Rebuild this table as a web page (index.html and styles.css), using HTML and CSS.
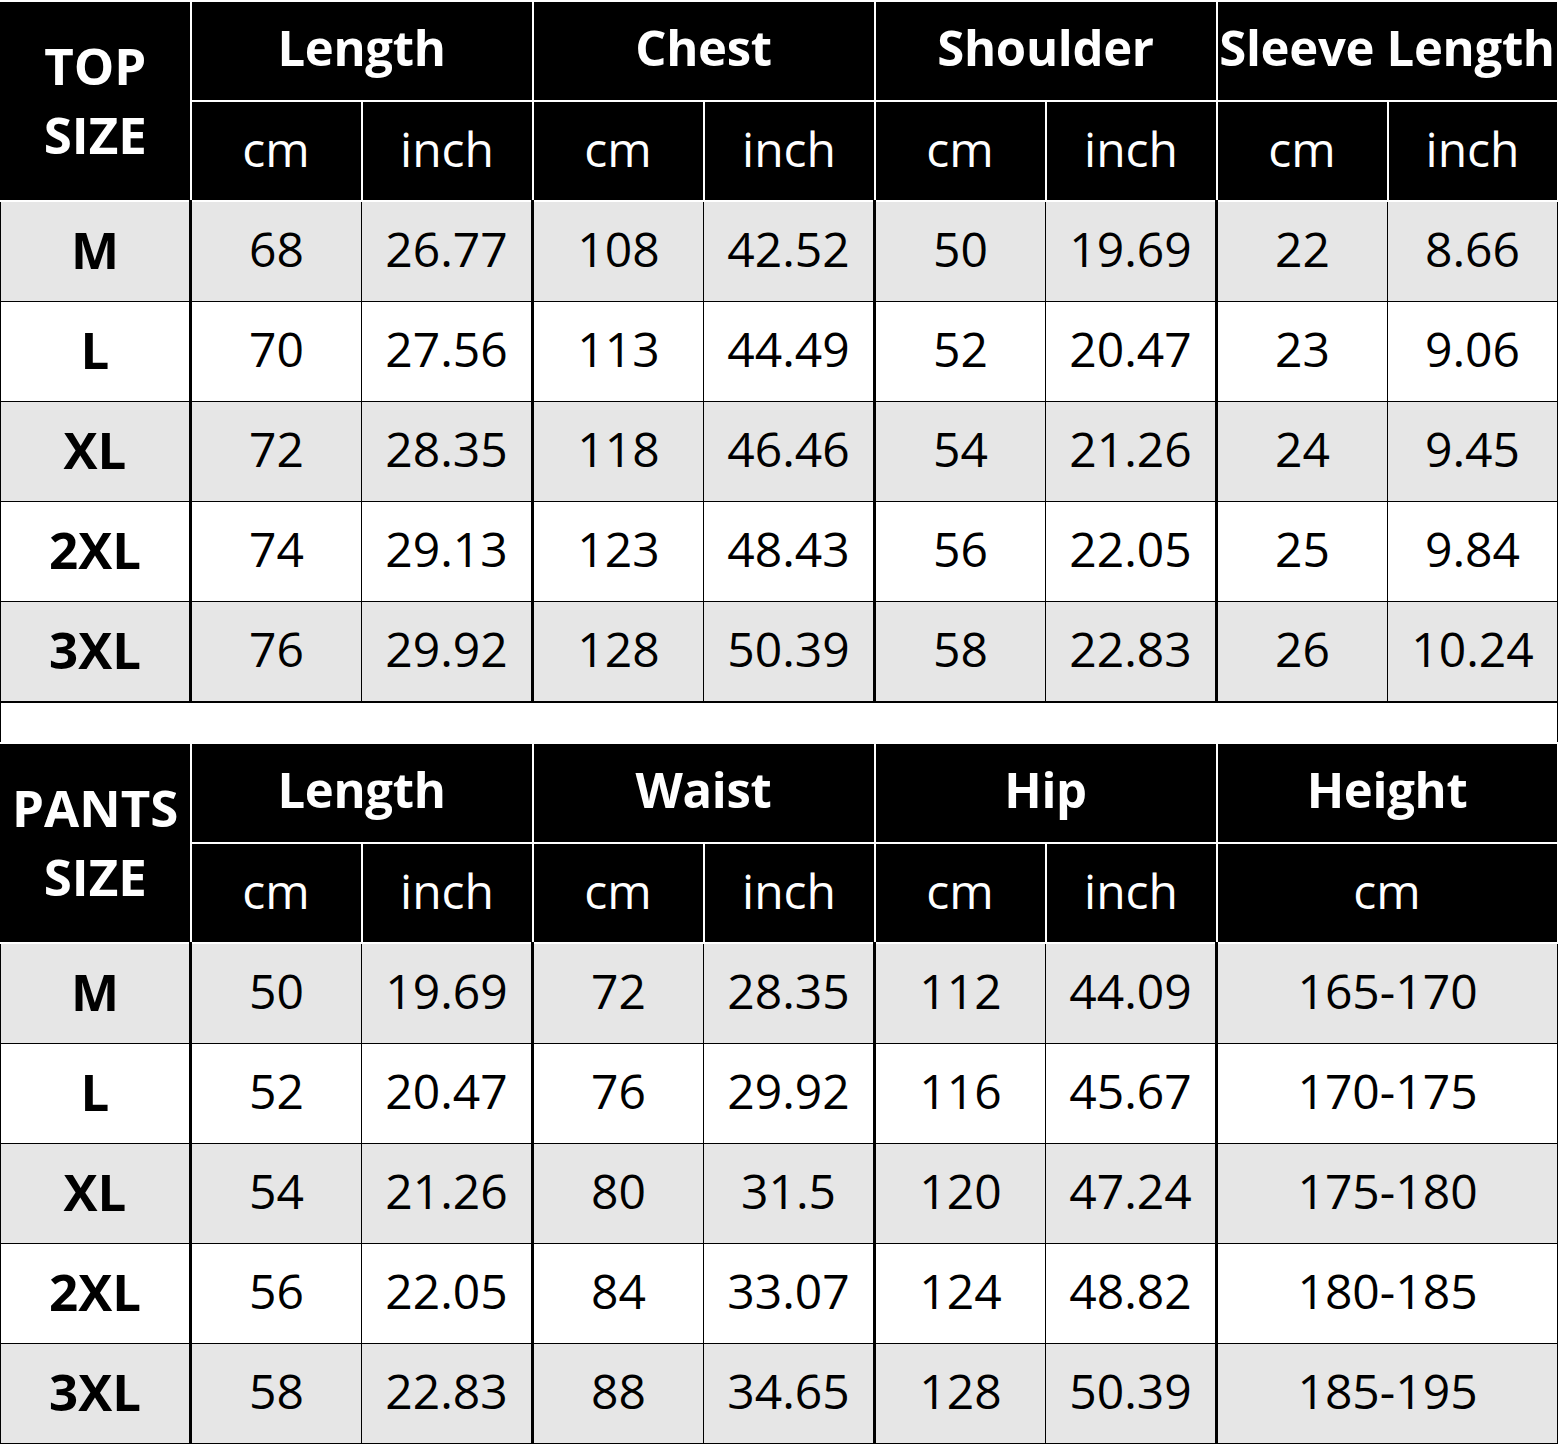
FILE: index.html
```html
<!DOCTYPE html>
<html>
<head>
<meta charset="utf-8">
<link rel="stylesheet" href="styles.css">
</head>
<body>
<table class="chart">
  <colgroup>
    <col class="c-size"><col class="c"><col class="c"><col class="c"><col class="c"><col class="c"><col class="c"><col class="c"><col class="c-last">
  </colgroup>
  <tbody>
    <tr class="hrow">
      <th class="hsize" rowspan="2">TOP<br>SIZE</th>
      <th class="hgroup" colspan="2">Length</th>
      <th class="hgroup" colspan="2">Chest</th>
      <th class="hgroup" colspan="2">Shoulder</th>
      <th class="hgroup" colspan="2">Sleeve Length</th>
    </tr>
    <tr class="hrow">
      <th class="unit">cm</th><th class="unit">inch</th>
      <th class="unit">cm</th><th class="unit">inch</th>
      <th class="unit">cm</th><th class="unit">inch</th>
      <th class="unit">cm</th><th class="unit">inch</th>
    </tr>
    <tr class="drow gray"><td class="size">M</td><td class="maj">68</td><td>26.77</td><td class="maj">108</td><td>42.52</td><td class="maj">50</td><td>19.69</td><td class="maj">22</td><td>8.66</td></tr>
    <tr class="drow"><td class="size">L</td><td class="maj">70</td><td>27.56</td><td class="maj">113</td><td>44.49</td><td class="maj">52</td><td>20.47</td><td class="maj">23</td><td>9.06</td></tr>
    <tr class="drow gray"><td class="size">XL</td><td class="maj">72</td><td>28.35</td><td class="maj">118</td><td>46.46</td><td class="maj">54</td><td>21.26</td><td class="maj">24</td><td>9.45</td></tr>
    <tr class="drow"><td class="size">2XL</td><td class="maj">74</td><td>29.13</td><td class="maj">123</td><td>48.43</td><td class="maj">56</td><td>22.05</td><td class="maj">25</td><td>9.84</td></tr>
    <tr class="drow gray"><td class="size">3XL</td><td class="maj">76</td><td>29.92</td><td class="maj">128</td><td>50.39</td><td class="maj">58</td><td>22.83</td><td class="maj">26</td><td>10.24</td></tr>
    <tr class="gap"><td colspan="9"></td></tr>
    <tr class="hrow">
      <th class="hsize" rowspan="2">PANTS<br>SIZE</th>
      <th class="hgroup" colspan="2">Length</th>
      <th class="hgroup" colspan="2">Waist</th>
      <th class="hgroup" colspan="2">Hip</th>
      <th class="hgroup" colspan="2">Height</th>
    </tr>
    <tr class="hrow">
      <th class="unit">cm</th><th class="unit">inch</th>
      <th class="unit">cm</th><th class="unit">inch</th>
      <th class="unit">cm</th><th class="unit">inch</th>
      <th class="unit" colspan="2">cm</th>
    </tr>
    <tr class="drow gray"><td class="size">M</td><td class="maj">50</td><td>19.69</td><td class="maj">72</td><td>28.35</td><td class="maj">112</td><td>44.09</td><td class="maj" colspan="2">165-170</td></tr>
    <tr class="drow"><td class="size">L</td><td class="maj">52</td><td>20.47</td><td class="maj">76</td><td>29.92</td><td class="maj">116</td><td>45.67</td><td class="maj" colspan="2">170-175</td></tr>
    <tr class="drow gray"><td class="size">XL</td><td class="maj">54</td><td>21.26</td><td class="maj">80</td><td>31.5</td><td class="maj">120</td><td>47.24</td><td class="maj" colspan="2">175-180</td></tr>
    <tr class="drow"><td class="size">2XL</td><td class="maj">56</td><td>22.05</td><td class="maj">84</td><td>33.07</td><td class="maj">124</td><td>48.82</td><td class="maj" colspan="2">180-185</td></tr>
    <tr class="drow gray last"><td class="size">3XL</td><td class="maj">58</td><td>22.83</td><td class="maj">88</td><td>34.65</td><td class="maj">128</td><td>50.39</td><td class="maj" colspan="2">185-195</td></tr>
  </tbody>
</table>
</body>
</html>
```

FILE: styles.css
```css
html, body {
  margin: 0;
  padding: 0;
  background: #ffffff;
}

.chart {
  border-collapse: collapse;
  table-layout: fixed;
  width: 1557px;
  font-family: "Open Sans", "Noto Sans", sans-serif;
  color: #000;
}

.c-size { width: 190px; }
.c { width: 171px; }
.c-last { width: 170px; }

.chart th,
.chart td {
  padding: 0;
  text-align: center;
  vertical-align: middle;
  white-space: nowrap;
  overflow: hidden;
  line-height: 60px;
}

.hrow th {
  background: #000;
  color: #fff;
  border: 2px solid #fff;
  font-weight: 700;
  font-size: 49px;
}

.hrow th.hsize {
  border-left: 1px solid #000;
  line-height: 69px;
  font-size: 51px;
  padding-bottom: 2px;
}

.hrow th.hgroup {
  height: 90px;
  padding-bottom: 8px;
  letter-spacing: -0.3px;
}

.hrow th.unit {
  height: 94px;
  padding-bottom: 4px;
  font-weight: 400;
  font-size: 48px;
}

.drow td {
  height: 94px;
  font-size: 48px;
  font-weight: 400;
  border: 1px solid #000;
  padding-bottom: 5px;
}

.drow td.maj {
  border-left: 3px solid #000;
}

.drow td.size {
  font-weight: 700;
  font-size: 51px;
  border-left: 1px solid #000;
}

.drow.gray td {
  background: #e6e6e6;
}

.drow.last td {
  border-bottom: 2px solid #000;
}

.gap td {
  height: 39px;
  background: #fff;
  border-top: 2px solid #000;
  border-left: 1px solid #000;
  border-right: 1px solid #000;
  border-bottom: 0;
}
```
